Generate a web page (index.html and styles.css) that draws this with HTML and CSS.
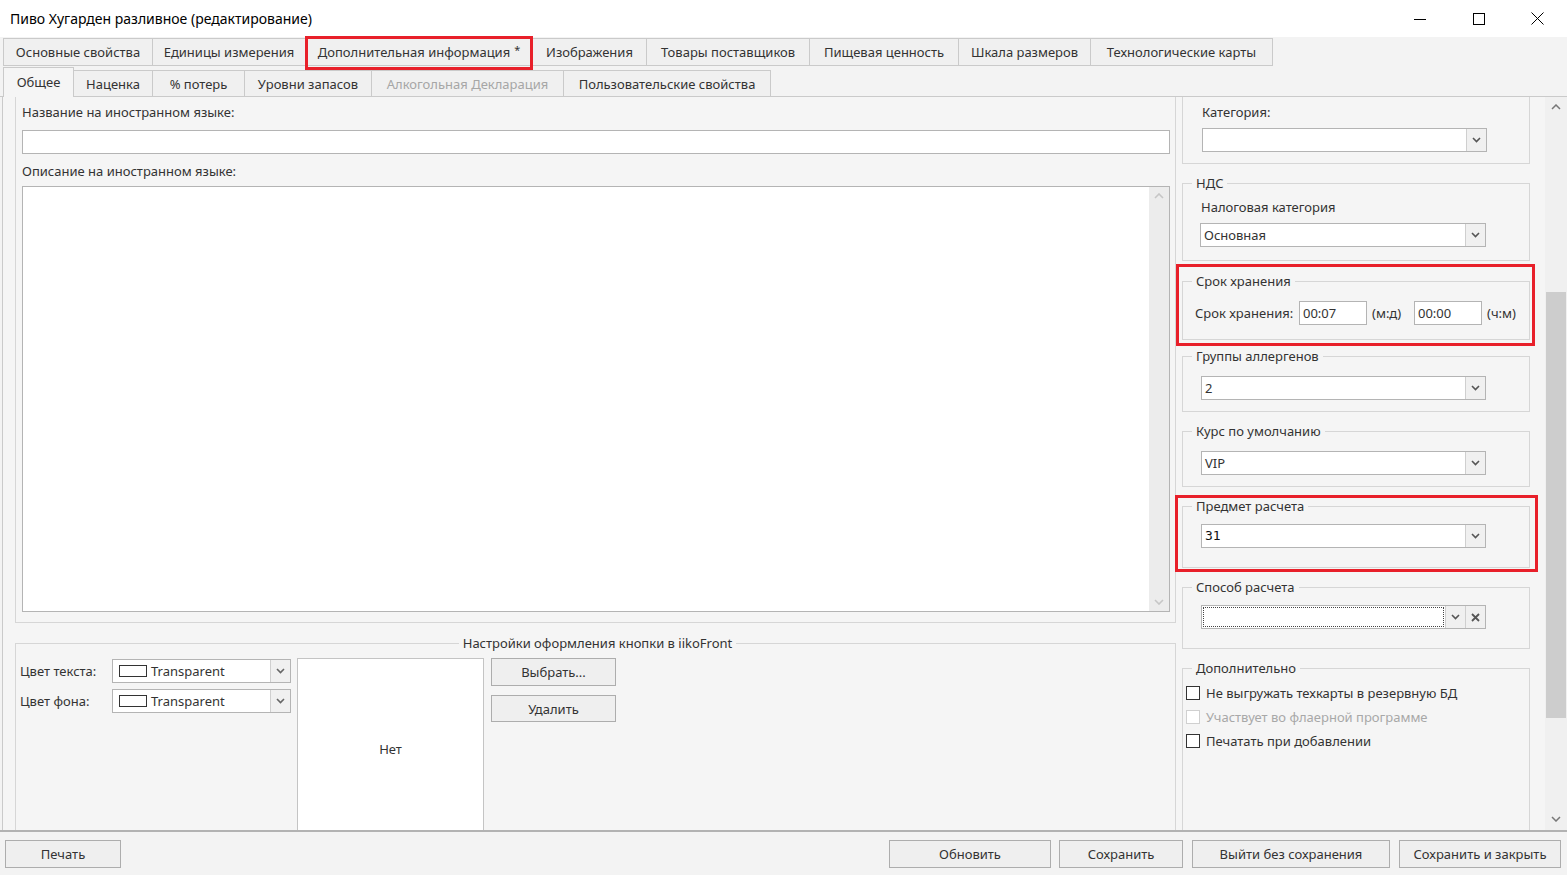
FILE: index.html
```html
<!DOCTYPE html>
<html lang="ru">
<head>
<meta charset="utf-8">
<title>Пиво Хугарден разливное (редактирование)</title>
<link rel="stylesheet" href="styles.css">
</head>
<body>
<div class="titlebar">
  <div class="title">Пиво Хугарден разливное (редактирование)</div>
  <div class="wctrls">
    <span class="wbtn"><svg width="12" height="12" viewBox="0 0 12 12"><path d="M0 6.5H12" stroke="#000" stroke-width="1"/></svg></span>
    <span class="wbtn"><svg width="12" height="12" viewBox="0 0 12 12"><rect x="0.5" y="0.5" width="11" height="11" fill="none" stroke="#000" stroke-width="1"/></svg></span>
    <span class="wbtn"><svg width="13" height="13" viewBox="0 0 13 13"><path d="M0.5 0.5L12.5 12.5M12.5 0.5L0.5 12.5" stroke="#000" stroke-width="1"/></svg></span>
  </div>
</div>

<div class="tabs1">
  <div class="tab w149">Основные свойства</div>
  <div class="tab w154">Единицы измерения</div>
  <div class="tab w228 marked">Дополнительная информация <sup class="star">*</sup><span class="hl hl-tab"></span></div>
  <div class="tab w115">Изображения</div>
  <div class="tab w164">Товары поставщиков</div>
  <div class="tab w149">Пищевая ценность</div>
  <div class="tab w133">Шкала размеров</div>
  <div class="tab w183">Технологические карты</div>
</div>

<div class="tabs2">
  <div class="tab sel w71">Общее</div>
  <div class="tab w80">Наценка</div>
  <div class="tab w93">% потерь</div>
  <div class="tab w128">Уровни запасов</div>
  <div class="tab w193 dis">Алкогольная Декларация</div>
  <div class="tab w208">Пользовательские свойства</div>
</div>

<div class="page">
  <div class="left">
    <div class="box">
      <div class="lbl">Название на иностранном языке:</div>
      <div class="input wide"></div>
      <div class="lbl lbl2">Описание на иностранном языке:</div>
      <div class="ta">
        <div class="tascroll">
          <svg width="10" height="6" viewBox="0 0 10 6"><path d="M1 5L5 1L9 5" fill="none" stroke="#c6c6c6" stroke-width="1.6"/></svg>
          <svg width="10" height="6" viewBox="0 0 10 6"><path d="M1 1L5 5L9 1" fill="none" stroke="#c6c6c6" stroke-width="1.6"/></svg>
        </div>
      </div>
    </div>
    <fieldset class="btnset">
      <legend class="clegend">Настройки оформления кнопки в iikoFront</legend>
      <div class="btnrow">
        <div class="colorcol">
          <span class="clabel">Цвет текста:</span>
          <div class="combo cw"><span class="val"><span class="swatch"></span>Transparent</span><span class="arr"><svg width="9" height="6" viewBox="0 0 9 6"><path d="M1 1L4.5 4.5L8 1" fill="none" stroke="#666" stroke-width="1.6"/></svg></span></div>
          <span class="clabel">Цвет фона:</span>
          <div class="combo cw"><span class="val"><span class="swatch"></span>Transparent</span><span class="arr"><svg width="9" height="6" viewBox="0 0 9 6"><path d="M1 1L4.5 4.5L8 1" fill="none" stroke="#666" stroke-width="1.6"/></svg></span></div>
        </div>
        <div class="preview">Нет</div>
        <div class="btncol">
          <div class="btn b1">Выбрать...</div>
          <div class="btn b2">Удалить</div>
        </div>
      </div>
    </fieldset>
  </div>

  <div class="right">
    <div class="rscroll">
      <div class="grp-top">
        <div class="lbl">Категория:</div>
        <div class="combo rw gap7"><span class="val"></span><span class="arr"><svg width="9" height="6" viewBox="0 0 9 6"><path d="M1 1L4.5 4.5L8 1" fill="none" stroke="#555" stroke-width="1.6"/></svg></span></div>
      </div>

      <div class="gwrap g-nds">
        <fieldset class="grp">
          <legend>НДС</legend>
          <div class="gbody pb-nds">
            <div class="lbl">Налоговая категория</div>
            <div class="combo rw gap7 nds"><span class="val">Основная</span><span class="arr"><svg width="9" height="6" viewBox="0 0 9 6"><path d="M1 1L4.5 4.5L8 1" fill="none" stroke="#555" stroke-width="1.6"/></svg></span></div>
          </div>
        </fieldset>
      </div>

      <div class="gwrap g-srok">
        <fieldset class="grp">
          <legend>Срок хранения</legend>
          <div class="gbody srow">
            <span class="slabel">Срок хранения:</span>
            <div class="input small">00:07</div>
            <span class="unit">(м:д)</span>
            <div class="input small">00:00</div>
            <span class="unit2">(ч:м)</span>
          </div>
        </fieldset>
        <span class="hl hl-srok"></span>
      </div>

      <div class="gwrap g-7">
        <fieldset class="grp">
          <legend>Группы аллергенов</legend>
          <div class="gbody pad11">
            <div class="combo rw"><span class="val">2</span><span class="arr"><svg width="9" height="6" viewBox="0 0 9 6"><path d="M1 1L4.5 4.5L8 1" fill="none" stroke="#555" stroke-width="1.6"/></svg></span></div>
          </div>
        </fieldset>
      </div>

      <div class="gwrap g-10">
        <fieldset class="grp">
          <legend>Курс по умолчанию</legend>
          <div class="gbody pad11">
            <div class="combo rw"><span class="val">VIP</span><span class="arr"><svg width="9" height="6" viewBox="0 0 9 6"><path d="M1 1L4.5 4.5L8 1" fill="none" stroke="#555" stroke-width="1.6"/></svg></span></div>
          </div>
        </fieldset>
      </div>

      <div class="gwrap g-10">
        <fieldset class="grp">
          <legend>Предмет расчета</legend>
          <div class="gbody pad9">
            <div class="combo rw"><span class="val mono">31</span><span class="arr"><svg width="9" height="6" viewBox="0 0 9 6"><path d="M1 1L4.5 4.5L8 1" fill="none" stroke="#555" stroke-width="1.6"/></svg></span></div>
          </div>
        </fieldset>
        <span class="hl hl-pred"></span>
      </div>

      <div class="gwrap g-10">
        <fieldset class="grp">
          <legend>Способ расчета</legend>
          <div class="gbody pad9">
            <div class="combo rw"><span class="val focus"><span class="dots"></span></span><span class="arr"><svg width="9" height="6" viewBox="0 0 9 6"><path d="M1 1L4.5 4.5L8 1" fill="none" stroke="#555" stroke-width="1.6"/></svg></span><span class="arr"><svg width="9" height="9" viewBox="0 0 9 9"><path d="M1 1L8 8M8 1L1 8" fill="none" stroke="#555" stroke-width="1.8"/></svg></span></div>
          </div>
        </fieldset>
      </div>

      <div class="gwrap g-10">
        <fieldset class="grp tall">
          <legend>Дополнительно</legend>
          <div class="gbody chk">
            <div class="crow"><span class="cb"></span>Не выгружать техкарты в резервную БД</div>
            <div class="crow dis"><span class="cb"></span>Участвует во флаерной программе</div>
            <div class="crow"><span class="cb"></span>Печатать при добавлении</div>
          </div>
        </fieldset>
      </div>
    </div>
    <div class="vscroll">
      <div class="sarrow top"><svg width="10" height="6" viewBox="0 0 10 6"><path d="M1 5L5 1L9 5" fill="none" stroke="#777" stroke-width="1.5"/></svg></div>
      <div class="track"><div class="thumb"></div></div>
      <div class="sarrow bot"><svg width="10" height="6" viewBox="0 0 10 6"><path d="M1 1L5 5L9 1" fill="none" stroke="#777" stroke-width="1.5"/></svg></div>
    </div>
  </div>
</div>

<div class="bbar">
  <div class="btn bw116">Печать</div>
  <div class="spacer"></div>
  <div class="btn bw162 m8">Обновить</div>
  <div class="btn bw124 m9">Сохранить</div>
  <div class="btn bw198 m9">Выйти без сохранения</div>
  <div class="btn bw162">Сохранить и закрыть</div>
</div>
</body>
</html>
```

FILE: styles.css
```css
* { box-sizing: border-box; }

body {
  margin: 0;
  width: 1567px;
  height: 875px;
  overflow: hidden;
  font-family: "Noto Sans", "Open Sans", sans-serif;
  font-size: 13px;
  color: #333;
  background: #f3f3f3;
}

/* title bar */
.titlebar {
  height: 37px;
  background: #fff;
  display: flex;
  align-items: center;
  justify-content: space-between;
}
.title { padding-left: 10px; font-size: 14px; color: #000; }
.wctrls { display: flex; align-self: stretch; }
.wbtn { width: 59px; display: flex; align-items: center; justify-content: center; }

/* tabs */
.tabs1 {
  height: 30px;
  display: flex;
  padding: 1px 0 0 3px;
  background: #f3f3f3;
}
.tab {
  position: relative;
  height: 28px;
  border: 1px solid #cacaca;
  margin-left: -1px;
  background: #f0f0f0;
  display: flex;
  align-items: center;
  justify-content: center;
  white-space: nowrap;
  color: #333;
}
.tab:first-child { margin-left: 0; }
.star { font-size: 11px; margin-left: 4px; position: relative; top: -3px; }

.tabs2 {
  height: 30px;
  display: flex;
  align-items: flex-end;
  padding-left: 3px;
  border-bottom: 1px solid #cacaca;
}
.tabs2 .tab { height: 26px; border-bottom: none; }
.tabs2 .tab.sel {
  height: 30px;
  margin-bottom: -1px;
  background: #f5f5f5;
  z-index: 1;
  padding-bottom: 2px;
}
.tab.dis { color: #a6a6a6; }

.w71 { width: 71px; } .w80 { width: 80px; } .w93 { width: 93px; }
.w128 { width: 128px; } .w193 { width: 193px; } .w208 { width: 208px; }
.w149 { width: 150px; } .w154 { width: 154px; } .w228 { width: 228px; }
.w115 { width: 115px; } .w164 { width: 164px; } .w133 { width: 133px; }
.w183 { width: 183px; }

/* highlights (annotation rectangles) */
.hl {
  position: absolute;
  border: 3px solid #e8202a;
  pointer-events: none;
  z-index: 3;
}
.hl-tab { left: -1px; right: -1px; top: -3px; bottom: -5px; }
.hl-srok { left: -6px; right: -5px; top: -8px; bottom: -6px; }
.hl-pred { left: -7px; right: -8px; top: -2px; bottom: -4px; }

/* page */
.page {
  display: flex;
  height: 733px;
  margin-left: 2px;
  border-left: 1px solid #cacaca;
  background: #f5f5f5;
  overflow: hidden;
}
.left {
  width: 1173px;
  flex-shrink: 0;
  padding-left: 12px;
  display: flex;
  flex-direction: column;
}
.box {
  flex-shrink: 0;
  width: 1161px;
  height: 526px;
  border: 1px solid #d6d6d6;
  border-top: none;
  padding: 6px 5px 0 6px;
}
.lbl { line-height: 18px; white-space: nowrap; }
.lbl2 { margin-top: 8px; }
.input {
  height: 24px;
  border: 1px solid #b4b4b4;
  background: #fff;
  line-height: 22px;
  padding-left: 3px;
}
.input.wide { margin-top: 9px; }
.ta {
  margin-top: 6px;
  height: 426px;
  border: 1px solid #b4b4b4;
  background: #fff;
  display: flex;
  justify-content: flex-end;
}
.tascroll {
  width: 20px;
  background: #ececec;
  display: flex;
  flex-direction: column;
  justify-content: space-between;
  align-items: center;
  padding: 6px 0 6px;
}

/* button look settings */
.btnset {
  margin: 11px 0 0 0;
  width: 1161px;
  height: 215px;
  flex-shrink: 0;
  border: 1px solid #d6d6d6;
  padding: 7px 0 0 4px;
  min-width: 0;
}
.clegend {
  margin: 0 auto;
  padding: 0 4px;
  line-height: 18px;
}
.btnrow { display: flex; align-items: flex-start; }
.colorcol {
  display: grid;
  grid-template-columns: 92px 179px;
  row-gap: 6px;
  align-items: center;
}
.clabel { white-space: nowrap; }
.swatch {
  display: inline-block;
  width: 28px;
  height: 12px;
  border: 1px solid #333;
  background: #fff;
  margin: 0 4px 0 3px;
  vertical-align: -1px;
}
.preview {
  margin-left: 6px;
  margin-top: -1px;
  width: 187px;
  height: 182px;
  border: 1px solid #c4c4c4;
  background: #fff;
  display: flex;
  align-items: center;
  justify-content: center;
}
.btncol { margin-left: 7px; margin-top: -1px; width: 125px; }
.btn {
  border: 1px solid #adadad;
  background: #efefef;
  display: flex;
  align-items: center;
  justify-content: center;
  white-space: nowrap;
  color: #333;
}
.b1 { height: 28px; }
.b2 { height: 27px; margin-top: 9px; }

/* combos */
.combo {
  display: flex;
  height: 24px;
  border: 1px solid #b4b4b4;
  background: #fff;
}
.combo .val {
  flex: 1;
  padding-left: 3px;
  line-height: 22px;
  white-space: nowrap;
  overflow: hidden;
  display: flex;
  align-items: center;
}
.combo .arr {
  width: 20px;
  border-left: 1px solid #cfcfcf;
  background: #f0f0f0;
  display: flex;
  align-items: center;
  justify-content: center;
}
.cw { width: 179px; }
.rw { width: 285px; }
.gap7 { margin-top: 7px; }
.nds { margin-left: -1px; width: 286px; }
.mono { font-family: "DejaVu Sans Mono", "Liberation Mono", monospace; font-size: 13px; color: #111; }
.val.focus { padding: 1px; }
.dots { flex: 1; align-self: stretch; border: 1px dotted #444; }

/* right panel */
.right { width: 391px; display: flex; }
.rscroll { width: 369px; padding: 0 15px 0 6px; }
.grp-top {
  border: 1px solid #d6d6d6;
  border-top: none;
  padding: 6px 0 11px 19px;
}
.gwrap { position: relative; }
.g-nds { margin-top: 10px; }
.g-srok { margin-top: 11px; }
.g-7 { margin-top: 7px; }
.g-10 { margin-top: 10px; }
.grp {
  margin: 0;
  padding: 0;
  border: 1px solid #d6d6d6;
  min-width: 0;
}
.grp legend {
  margin-left: 9px;
  padding: 0 4px;
  line-height: 18px;
}
.gbody { padding-left: 18px; }
.pb-nds { padding-top: 6px; padding-bottom: 13px; }
.pad11 { padding-top: 11px; padding-bottom: 11px; }
.pad9 { padding-top: 9px; padding-bottom: 19px; }
.srow {
  display: flex;
  align-items: center;
  padding: 11px 0 14px 12px;
}
.slabel { width: 104px; white-space: nowrap; }
.input.small { width: 68px; }
.unit { width: 47px; padding-left: 5px; }
.unit2 { padding-left: 5px; }
.grp.tall { height: 220px; }
.chk { padding: 4px 0 0 3px; }
.crow { height: 24px; display: flex; align-items: center; white-space: nowrap; }
.cb {
  width: 14px;
  height: 14px;
  border: 1px solid #333;
  background: #fff;
  margin-right: 6px;
}
.crow.dis { color: #a8a8a8; }
.crow.dis .cb { border-color: #d0d0d0; }

.vscroll {
  width: 22px;
  background: #f0f0f0;
  display: flex;
  flex-direction: column;
}
.sarrow { display: flex; align-items: center; justify-content: center; }
.sarrow.top { height: 20px; }
.sarrow.bot { height: 22px; }
.track { flex: 1; padding: 0 1px; }
.thumb { margin-top: 175px; height: 426px; background: #cdcdcd; }

/* bottom bar */
.bbar {
  height: 45px;
  border-top: 2px solid #b2b2b2;
  background: #f3f3f3;
  display: flex;
  align-items: flex-start;
  padding: 8px 6px 0 5px;
}
.bbar .btn { height: 28px; }
.spacer { flex: 1; }
.bw116 { width: 116px; } .bw162 { width: 162px; } .bw124 { width: 124px; } .bw198 { width: 198px; }
.m8 { margin-right: 8px; } .m9 { margin-right: 9px; }
```
